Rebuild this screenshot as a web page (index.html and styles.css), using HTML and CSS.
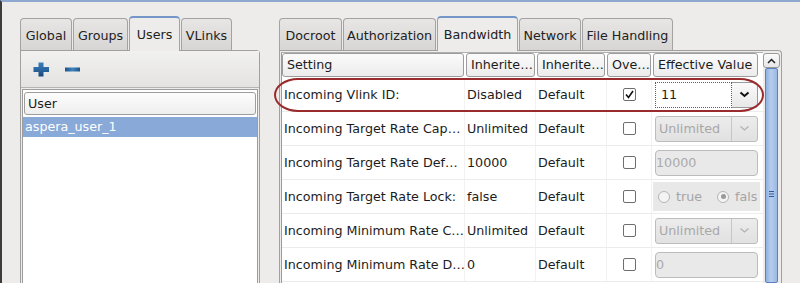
FILE: index.html
```html
<!DOCTYPE html>
<html>
<head>
<meta charset="utf-8">
<link rel="stylesheet" href="styles.css">
</head>
<body>
<div class="window">
  <div class="side">
    <div class="tabs">
      <div class="tab t-global">Global</div>
      <div class="tab t-groups">Groups</div>
      <div class="tab active t-users">Users</div>
      <div class="tab t-vlinks">VLinks</div>
    </div>
    <div class="panel left-panel">
      <div class="toolbar">
        <svg class="ic-plus" width="17" height="15" viewBox="0 0 17 15">
          <defs>
            <linearGradient id="pg" x1="0" y1="0" x2="0" y2="1">
              <stop offset="0" stop-color="#3b7fba"/>
              <stop offset="0.5" stop-color="#2a67a0"/>
              <stop offset="1" stop-color="#174879"/>
            </linearGradient>
          </defs>
          <path d="M5.5 0.5h5v4.5h5.5v5h-5.5v4.5h-5v-4.5h-5v-5h5z" fill="url(#pg)"/>
        </svg>
        <svg class="ic-minus" width="15" height="5" viewBox="0 0 15 5">
          <defs>
            <linearGradient id="mg" x1="0" y1="0" x2="1" y2="0">
              <stop offset="0" stop-color="#1d5488"/>
              <stop offset="0.5" stop-color="#3f83bd"/>
              <stop offset="1" stop-color="#1d5488"/>
            </linearGradient>
          </defs>
          <rect x="0" y="0.5" width="15" height="4" fill="url(#mg)"/>
        </svg>
      </div>
      <div class="list">
        <div class="list-head">User</div>
        <div class="list-row sel">aspera_user_1</div>
      </div>
    </div>
  </div>

  <div class="main">
    <div class="tabs">
      <div class="tab t-docroot">Docroot</div>
      <div class="tab t-auth">Authorization</div>
      <div class="tab active t-bw">Bandwidth</div>
      <div class="tab t-net">Network</div>
      <div class="tab t-file">File Handling</div>
    </div>
    <div class="panel right-panel">
      <div class="table">
        <div class="thead">
          <div class="th th-set">Setting</div>
          <div class="th th-i1">Inherite…</div>
          <div class="th th-i2">Inherite…</div>
          <div class="th th-ov">Ove…</div>
          <div class="th th-ev">Effective Value</div>
        </div>

        <div class="row">
          <div class="cell">Incoming Vlink ID:</div>
          <div class="cell">Disabled</div>
          <div class="cell">Default</div>
          <div class="cell ck"><span class="checkbox checked"><svg width="11" height="11" viewBox="0 0 11 11"><path d="M2 5.5 L4.5 8.5 L9 2" fill="none" stroke="#111" stroke-width="1.6"/></svg></span></div>
          <div class="cell val">
            <div class="combo active">
              <div class="field">11</div>
              <div class="btn"><svg width="11" height="7" viewBox="0 0 11 7"><path d="M1.5 1.5 L5.5 5 L9.5 1.5" fill="none" stroke="#111" stroke-width="2"/></svg></div>
            </div>
          </div>
        </div>

        <div class="row">
          <div class="cell">Incoming Target Rate Cap…</div>
          <div class="cell">Unlimited</div>
          <div class="cell">Default</div>
          <div class="cell ck"><span class="checkbox"></span></div>
          <div class="cell val">
            <div class="combo disabled">
              <div class="field">Unlimited</div>
              <div class="btn"><svg width="11" height="7" viewBox="0 0 11 7"><path d="M1.5 1.5 L5.5 5 L9.5 1.5" fill="none" stroke="#b2b2b2" stroke-width="1.3"/></svg></div>
            </div>
          </div>
        </div>

        <div class="row">
          <div class="cell">Incoming Target Rate Def…</div>
          <div class="cell">10000</div>
          <div class="cell">Default</div>
          <div class="cell ck"><span class="checkbox"></span></div>
          <div class="cell val"><div class="entry">10000</div></div>
        </div>

        <div class="row">
          <div class="cell">Incoming Target Rate Lock:</div>
          <div class="cell">false</div>
          <div class="cell">Default</div>
          <div class="cell ck"><span class="checkbox"></span></div>
          <div class="cell val">
            <div class="radios">
              <span class="radio"></span><span class="rlabel">true</span>
              <span class="radio on"></span><span class="rlabel">fals</span>
            </div>
          </div>
        </div>

        <div class="row">
          <div class="cell">Incoming Minimum Rate C…</div>
          <div class="cell">Unlimited</div>
          <div class="cell">Default</div>
          <div class="cell ck"><span class="checkbox"></span></div>
          <div class="cell val">
            <div class="combo disabled">
              <div class="field">Unlimited</div>
              <div class="btn"><svg width="11" height="7" viewBox="0 0 11 7"><path d="M1.5 1.5 L5.5 5 L9.5 1.5" fill="none" stroke="#b2b2b2" stroke-width="1.3"/></svg></div>
            </div>
          </div>
        </div>

        <div class="row">
          <div class="cell">Incoming Minimum Rate D…</div>
          <div class="cell">0</div>
          <div class="cell">Default</div>
          <div class="cell ck"><span class="checkbox"></span></div>
          <div class="cell val"><div class="entry">0</div></div>
        </div>
      </div>

      <div class="scrollbar">
        <div class="sb-up"><svg width="9" height="6" viewBox="0 0 9 6"><path d="M1 5 L4.5 1.5 L8 5" fill="none" stroke="#222" stroke-width="1.5"/></svg></div>
        <div class="sb-thumb"><svg width="5" height="8" viewBox="0 0 5 8"><path d="M0 1.5h5M0 4h5M0 6.5h5" stroke="#2f5a96" stroke-width="1"/></svg></div>
      </div>

      <div class="highlight"></div>
    </div>
  </div>
</div>
</body>
</html>
```

FILE: styles.css
```css
* { box-sizing: border-box; }
html, body { margin: 0; padding: 0; }
body {
  font-family: "DejaVu Sans", "Bitstream Vera Sans", sans-serif;
  font-size: 12.7px;
  color: #1c1c1c;
  background: #edecea;
  overflow: hidden;
}
.window {
  width: 800px;
  height: 283px;
  border-top: 2px solid #8ea8d0;
  border-left: 2px solid #3c3c3c;
  display: flex;
  padding: 14px 0 0 18px;
  overflow: hidden;
}
.side { width: 240px; display: flex; flex-direction: column; }
.main { width: 503px; margin-left: 19px; display: flex; flex-direction: column; }

.tabs { display: flex; align-items: flex-end; height: 34px; }
.tab {
  height: 32px;
  padding: 9px 0 0;
  line-height: 16px;
  text-align: center;
  border: 1px solid #a3a3a3;
  border-bottom: none;
  border-radius: 4px 4px 0 0;
  background: linear-gradient(#e7e6e5, #d7d6d5);
  margin-right: 1px;
  white-space: nowrap;
  color: #222;
}
.tab.active {
  height: 35px;
  margin-bottom: -1px;
  position: relative;
  z-index: 1;
  background: #edecea;
  border-top: 2px solid #7596c9;
}
.t-global { width: 52px; }
.t-groups { width: 55px; }
.t-users { width: 51px; }
.t-vlinks { width: 51px; }
.t-docroot { width: 63px; }
.t-auth { width: 93px; }
.t-bw { width: 81px; }
.t-net { width: 62px; }
.t-file { width: 91px; }

.panel {
  flex: 1;
  border: 1px solid #a0a0a0;
  border-bottom: none;
  border-radius: 0 4px 0 0;
  background: #edecea;
}
.left-panel { display: flex; flex-direction: column; }
.toolbar {
  height: 37px;
  border-bottom: 1px solid #b4b4b4;
  display: flex;
  align-items: center;
  padding-left: 12px;
  background: linear-gradient(#f1f1f0, #e4e3e2);
}
.ic-minus { margin-left: 15px; margin-top: 1px; }
.list {
  flex: 1;
  margin: 1px 1px 0;
  border: 1px solid #9c9c9c;
  border-bottom: none;
  background: #fff;
}
.list-head {
  height: 23px;
  margin: 2px 1px 2px;
  border: 1px solid #9d9d9d;
  border-radius: 3px;
  background: linear-gradient(#fdfdfd, #eeeeee);
  padding-left: 3px;
  line-height: 21px;
}
.list-row { height: 20px; line-height: 20px; padding-left: 2px; }
.list-row.sel { background: #89a9d8; color: #fff; }

.right-panel { position: relative; display: flex; padding: 1px 1px 0 1px; }
.table {
  width: 482px;
  border-left: 1px solid #9a9a9a;
  border-top: 1px solid #b0b0b0;
  background: #fff;
}
.thead { display: flex; height: 25px; }
.th {
  height: 24px;
  border: 1px solid #9c9c9c;
  border-radius: 3px;
  background: linear-gradient(#fbfbfb, #ececec);
  padding-left: 4px;
  line-height: 22px;
  white-space: nowrap;
  overflow: hidden;
  margin-right: 2px;
}
.th-set { width: 182px; }
.th-i1 { width: 69px; }
.th-i2 { width: 68px; }
.th-ov { width: 44px; }
.th-ev { width: 105px; }

.row {
  display: grid;
  grid-template-columns: 183px 71px 71px 45px 1fr;
  height: 34px;
  border-bottom: 1px solid #ececec;
}
.cell {
  border-right: 1px solid #f2f2f2;
  padding-left: 2px;
  line-height: 33px;
  white-space: nowrap;
  overflow: hidden;
}
.cell:last-child { border-right: none; }
.cell.ck { display: flex; align-items: center; justify-content: center; padding-left: 0; }
.cell.val { display: flex; align-items: center; padding-left: 3px; }

.checkbox {
  width: 13px;
  height: 13px;
  border: 1px solid #6e6e6e;
  border-radius: 2px;
  background: #fff;
  display: flex;
  align-items: center;
  justify-content: center;
}

.combo {
  display: flex;
  width: 103px;
  height: 26px;
  border: 1px solid #9a9a9a;
  border-radius: 3px;
  line-height: 24px;
}
.combo .field { width: 76px; padding-left: 4px; white-space: nowrap; overflow: hidden; }
.combo .btn { flex: 1; display: flex; align-items: center; justify-content: center; }
.combo.active { background: linear-gradient(#fafafa, #e8e8e8); }
.combo.active .field {
  background: #fff;
  border: 1px dotted #3a61a3;
  margin: -1px 0 -1px -1px;
  width: 77px;
  line-height: 24px;
  padding-left: 5px;
}
.combo.disabled {
  border-color: #bdbdbd;
  background: linear-gradient(#ececec, #e1e1e1);
  color: #a8a8a8;
}
.combo.disabled .field { padding-left: 3px; border-right: 1px solid #c6c6c6; }

.entry {
  width: 103px;
  height: 26px;
  border: 1px solid #bcbcbc;
  border-radius: 4px;
  background: #e9e9e9;
  color: #a9a9a9;
  line-height: 24px;
  padding-left: 0;
}

.radios {
  margin-left: -2px;
  height: 29px;
  width: 107px;
  overflow: hidden;
  background: #e8e8e8;
  display: flex;
  align-items: center;
  padding-left: 5px;
  color: #a5a5a5;
  white-space: nowrap;
}
.radio {
  width: 12px;
  height: 12px;
  flex: 0 0 12px;
  border: 1px solid #b5b5b5;
  border-radius: 50%;
  background: #f4f4f4;
  display: flex;
  align-items: center;
  justify-content: center;
}
.radio.on::after {
  content: "";
  width: 5px;
  height: 5px;
  border-radius: 50%;
  background: #9a9a9a;
}
.rlabel { margin-left: 6px; margin-right: 15px; }
.rlabel:last-child { margin-right: 0; }

.scrollbar { width: 17px; display: flex; flex-direction: column; padding-top: 1px; }
.sb-up {
  height: 15px;
  border: 1px solid #9a9a9a;
  border-radius: 3px;
  background: linear-gradient(#fbfbfb, #e6e6e6);
  display: flex;
  align-items: center;
  justify-content: center;
}
.sb-thumb {
  flex: 1;
  margin: 0 2px 0 2px;
  border: 1px solid #5a80bd;
  border-radius: 2px;
  background: linear-gradient(to right, #8fb0df, #b7cdee 45%, #9ab9e4);
  display: flex;
  justify-content: center;
  padding-top: 121px;
}
.sb-thumb svg { display: block; }

.highlight {
  position: absolute;
  left: -6px;
  top: 27px;
  width: 490px;
  height: 34px;
  border: 2px solid #992b2d;
  border-radius: 24px / 17px;
  pointer-events: none;
  z-index: 2;
}
```
